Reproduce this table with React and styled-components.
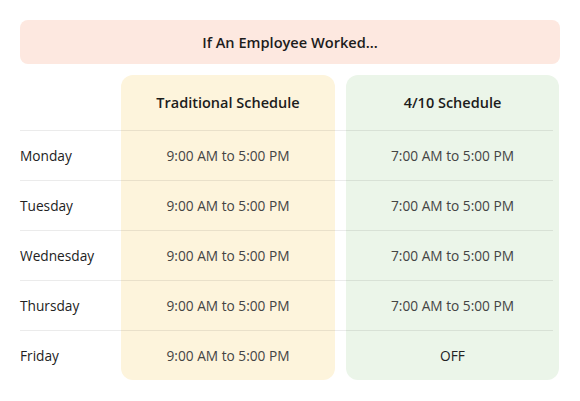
import React from "react";
import styled, { createGlobalStyle } from "styled-components";

const GlobalStyle = createGlobalStyle`
  body {
    margin: 0;
    background: #ffffff;
    font-family: "Open Sans", "Noto Sans", sans-serif;
  }
`;

const Page = styled.div`
  width: 540px;
  padding: 20px;
`;

const Banner = styled.div`
  height: 44px;
  display: flex;
  align-items: center;
  justify-content: center;
  background: #fde8e0;
  border-radius: 8px;
  font-size: 14.6px;
  font-weight: 600;
  color: #1c1c1c;
`;

const Table = styled.div`
  margin-top: 11px;
  display: grid;
  grid-template-columns: 101px 214px 11px 213px;
  grid-template-rows: 55px repeat(5, 1px 49px);
`;

const Panel = styled.div`
  grid-column: ${p => p.col};
  grid-row: 1 / -1;
  background: ${p => p.bg};
  border-radius: 12px;
`;

const Line = styled.div`
  grid-column: 1 / -1;
  grid-row: ${p => p.row};
  margin-right: 6px;
  background: rgba(0, 0, 0, 0.08);
`;

const Cell = styled.div`
  grid-column: ${p => p.col};
  grid-row: ${p => p.row};
  display: flex;
  align-items: center;
  justify-content: ${p => (p.left ? "flex-start" : "center")};
  font-size: ${p => (p.head ? "14.5px" : "13.7px")};
  color: ${p => p.tone || "#444"};
  font-weight: ${p => (p.head ? 600 : 400)};
  z-index: 1;
`;

const days = [
  { day: "Monday", trad: "9:00 AM to 5:00 PM", four: "7:00 AM to 5:00 PM" },
  { day: "Tuesday", trad: "9:00 AM to 5:00 PM", four: "7:00 AM to 5:00 PM" },
  { day: "Wednesday", trad: "9:00 AM to 5:00 PM", four: "7:00 AM to 5:00 PM" },
  { day: "Thursday", trad: "9:00 AM to 5:00 PM", four: "7:00 AM to 5:00 PM" },
  { day: "Friday", trad: "9:00 AM to 5:00 PM", four: "OFF" },
];

export default function App() {
  return (
    <>
      <GlobalStyle />
      <Page>
        <Banner>If An Employee Worked...</Banner>
        <Table>
          <Panel col={2} bg="#fdf4dc" />
          <Panel col={4} bg="#ebf5e9" />
          <Cell col={2} row={1} head tone="#1c1c1c">Traditional Schedule</Cell>
          <Cell col={4} row={1} head tone="#1c1c1c">4/10 Schedule</Cell>
          {days.map((d, i) => {
            const row = 3 + i * 2;
            return (
              <React.Fragment key={d.day}>
                <Line row={row - 1} />
                <Cell col={1} row={row} left tone="#222">{d.day}</Cell>
                <Cell col={2} row={row}>{d.trad}</Cell>
                <Cell col={4} row={row} tone={d.four === "OFF" ? "#222" : "#444"}>{d.four}</Cell>
              </React.Fragment>
            );
          })}
        </Table>
      </Page>
    </>
  );
}
